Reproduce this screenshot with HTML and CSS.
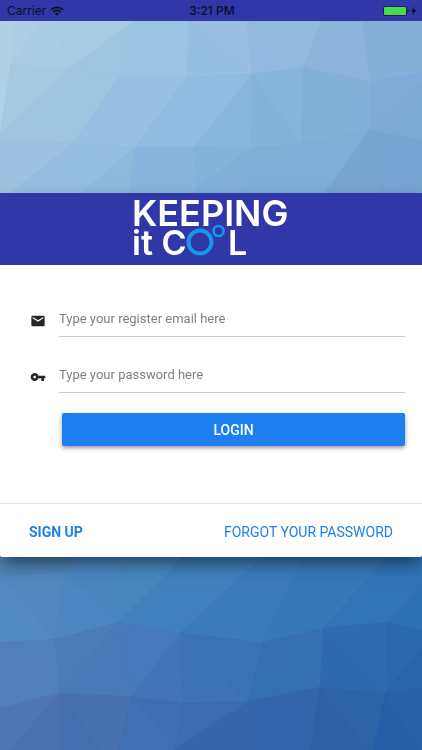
FILE: index.html
```html
<!DOCTYPE html>
<html lang="en">
<head>
    <meta charset="UTF-8">
    <meta name="viewport" content="width=device-width, initial-scale=1.0">
    <title>Keeping it Cool - Login</title>
    <link rel="stylesheet" href="styles.css">
</head>
<body>
    <svg class="background" viewBox="0 0 1266 2250" preserveAspectRatio="xMidYMid slice" aria-hidden="true">
        <defs>
            <linearGradient id="base" x1="0" y1="0" x2="0.3" y2="1">
                <stop offset="0" stop-color="#a5c9e1"/>
                <stop offset="1" stop-color="#3368ab"/>
            </linearGradient>
        </defs>
        <rect width="1266" height="2250" fill="url(#base)"/>

        <!-- top -->
        <polygon fill="#b0d0e6" points="0,0 48,0 45,60 32,192 0,405"/>
        <polygon fill="#adcee5" points="48,0 165,0 125,60 32,192 45,60"/>
        <polygon fill="#a9cbe4" points="165,0 150,0 170,60 207,207 32,192 125,60"/>
        <polygon fill="#a8cae3" points="155,0 490,0 405,60 207,207 170,60"/>
        <polygon fill="#a0c5e1" points="405,60 207,207 358,231 385,75"/>
        <polygon fill="#9dc4e2" points="405,0 565,0 565,231 358,231 385,75 405,60"/>
        <polygon fill="#97bfe1" points="565,60 755,222 560,231"/>
        <polygon fill="#9abfe2" points="565,60 740,60 755,222"/>
        <polygon fill="#93b9df" points="740,60 910,202 755,222"/>
        <polygon fill="#94bbdc" points="740,60 965,60 910,202"/>
        <polygon fill="#8eb4da" points="965,60 1087,60 1110,245 910,202"/>
        <polygon fill="#87b0d9" points="1087,60 1266,60 1266,218 1110,245"/>

        <polygon fill="#a5c9e1" points="32,192 207,207 0,405"/>
        <polygon fill="#9fc5e1" points="207,207 358,231 218,432 0,420 0,405"/>
        <polygon fill="#99c0e2" points="358,231 560,231 407,440 218,432"/>
        <polygon fill="#91bbdf" points="560,231 755,222 583,442 407,440"/>
        <polygon fill="#8bb6dc" points="755,222 755,444 583,442"/>
        <polygon fill="#86b2d9" points="755,222 903,432 755,444"/>
        <polygon fill="#8ab5da" points="755,222 910,202 903,432"/>
        <polygon fill="#83b0d9" points="910,202 1107,390 903,432"/>
        <polygon fill="#85b0d8" points="910,202 1110,245 1107,390"/>
        <polygon fill="#82aad9" points="1110,245 1266,218 1266,250 1107,390"/>
        <polygon fill="#7ea8d6" points="1266,250 1266,422 1107,390"/>

        <polygon fill="#9ec2df" points="0,420 218,432 30,580 0,600"/>
        <polygon fill="#95bde0" points="218,432 407,440 220,600 0,600 30,580"/>
        <polygon fill="#8dbadb" points="407,440 385,600 220,600"/>
        <polygon fill="#8ab4db" points="407,440 583,442 590,560 580,600 385,600"/>
        <polygon fill="#85b3da" points="583,442 755,444 590,560"/>
        <polygon fill="#80b0d9" points="755,444 720,600 580,600 590,560"/>
        <polygon fill="#7faed8" points="755,444 903,432 1107,390 960,600 720,600"/>
        <polygon fill="#78a6d3" points="1107,390 1147,600 960,600"/>
        <polygon fill="#77a4d2" points="1107,390 1266,422 1266,600 1147,600"/>

        <!-- bottom -->
        <polygon fill="#4c84b4" points="0,1640 250,1640 195,1718 0,1730"/>
        <polygon fill="#5288c0" points="0,1730 195,1718 165,1918"/>
        <polygon fill="#528ac4" points="0,1730 165,1918 0,1927"/>
        <polygon fill="#4d86c0" points="195,1718 352,1867 165,1918"/>
        <polygon fill="#4986bf" points="195,1718 250,1640 365,1640 352,1867"/>
        <polygon fill="#4687be" points="365,1640 570,1640 500,1725 352,1867"/>
        <polygon fill="#4080bd" points="570,1640 820,1640 540,1898 352,1867 500,1725"/>
        <polygon fill="#3b7bb9" points="820,1640 925,1640 788,1928 540,1898"/>
        <polygon fill="#3679b6" points="925,1640 1190,1640 970,1883 788,1928"/>
        <polygon fill="#3074b5" points="1190,1640 1266,1640 1266,1750 1162,1867 970,1883"/>
        <polygon fill="#2e71b2" points="1266,1750 1266,1890 1162,1867"/>

        <polygon fill="#5080bb" points="0,1927 165,1918 180,2078"/>
        <polygon fill="#507fba" points="0,1927 180,2078 20,2120 0,2120"/>
        <polygon fill="#4a7db8" points="165,1918 352,1867 180,2078"/>
        <polygon fill="#487ab7" points="352,1867 395,2090 180,2078"/>
        <polygon fill="#467abb" points="352,1867 540,1898 395,2090"/>
        <polygon fill="#4275b6" points="540,1898 550,2110 395,2090"/>
        <polygon fill="#3c74b5" points="540,1898 745,2105 550,2110"/>
        <polygon fill="#3973b2" points="540,1898 788,1928 745,2105"/>
        <polygon fill="#346fae" points="788,1928 960,2062 745,2105"/>
        <polygon fill="#3570b0" points="788,1928 970,1883 960,2062"/>
        <polygon fill="#2e69ad" points="970,1883 1155,2080 960,2062"/>
        <polygon fill="#2f6cae" points="970,1883 1162,1867 1155,2080"/>
        <polygon fill="#2a69ae" points="1162,1867 1266,1890 1266,1940 1155,2080"/>
        <polygon fill="#2964a9" points="1266,1940 1266,2062 1155,2080"/>

        <polygon fill="#4f76b2" points="0,2120 20,2120 180,2078 30,2250 0,2250"/>
        <polygon fill="#4b72ae" points="180,2078 180,2250 30,2250"/>
        <polygon fill="#466eae" points="180,2078 300,2250 180,2250"/>
        <polygon fill="#4673b0" points="180,2078 395,2090 355,2250 300,2250"/>
        <polygon fill="#3f70b2" points="395,2090 530,2240 525,2250 355,2250"/>
        <polygon fill="#3e6eb2" points="395,2090 550,2110 530,2240"/>
        <polygon fill="#3a6cae" points="550,2110 745,2105 530,2245"/>
        <polygon fill="#3566aa" points="745,2105 750,2250 525,2250"/>
        <polygon fill="#3265a9" points="745,2105 960,2062 930,2250 750,2250"/>
        <polygon fill="#2d61a4" points="960,2062 1110,2250 930,2250"/>
        <polygon fill="#2d64a6" points="960,2062 1155,2080 1120,2250 1110,2250"/>
        <polygon fill="#265ea6" points="1155,2080 1266,2250 1120,2250"/>
        <polygon fill="#2760a6" points="1155,2080 1266,2062 1266,2250"/>
    </svg>

    <header class="status-bar">
        <span class="carrier">
            Carrier
            <svg width="14" height="10" viewBox="0 0 14 10" aria-hidden="true">
                <g fill="none" stroke="#0b0e2c" stroke-width="1.6">
                    <path d="M1 3.8a8.6 8.6 0 0 1 12 0"/>
                    <path d="M3.1 6a5.6 5.6 0 0 1 7.8 0"/>
                </g>
                <path fill="#0b0e2c" d="M7 9.8 4.9 7.7a3 3 0 0 1 4.2 0z"/>
            </svg>
        </span>
        <span class="time">3:21 PM</span>
        <span class="battery">
            <svg width="34" height="12" viewBox="0 0 34 12" aria-hidden="true">
                <rect x="0.5" y="1.5" width="23" height="9" rx="1.5" fill="#4cd950" stroke="#14205a"/>
                <path fill="#0b0e2c" d="M24.5 4.2c1.6.5 1.6 3.1 0 3.6z"/>
                <path fill="#0b0e2c" d="M31.8 1.5 28 6.5h2.2l-1 4 4.2-5.5h-2.4z"/>
            </svg>
        </span>
    </header>

    <main>
        <form class="card">
            <div class="card-header">
                <svg class="logo" width="158" height="72" viewBox="0 0 158 72" role="img" aria-label="Keeping it Cool">
                    <text class="logo-top" x="0" y="33">KEEPING</text>
                    <text x="0" y="62">it C</text>
                    <text x="96" y="62">L</text>
                    <circle cx="68" cy="49" r="11.5" stroke-width="4"/>
                    <circle cx="86.5" cy="38" r="5" stroke-width="2.6"/>
                </svg>
            </div>

            <div class="card-body">
                <div class="field">
                    <label for="email" aria-label="Email">
                        <svg width="16" height="16" viewBox="0 0 24 24" aria-hidden="true">
                            <path fill="#262626" d="M20 4H4c-1.1 0-1.99.9-1.99 2L2 18c0 1.1.9 2 2 2h16c1.1 0 2-.9 2-2V6c0-1.1-.9-2-2-2zm0 4l-8 5-8-5V6l8 5 8-5v2z"/>
                        </svg>
                    </label>
                    <input type="email" id="email" placeholder="Type your register email here">
                </div>
                <div class="field">
                    <label for="password" aria-label="Password">
                        <svg width="16" height="16" viewBox="0 0 24 24" aria-hidden="true">
                            <path fill="#262626" d="M12.65 10C11.83 7.67 9.61 6 7 6c-3.31 0-6 2.69-6 6s2.69 6 6 6c2.61 0 4.83-1.67 5.65-4H17v4h4v-4h2v-4H12.65zM7 14c-1.1 0-2-.9-2-2s.9-2 2-2 2 .9 2 2-.9 2-2 2z"/>
                        </svg>
                    </label>
                    <input type="password" id="password" placeholder="Type your password here">
                </div>
                <button type="submit">LOGIN</button>
            </div>

            <div class="card-footer">
                <a class="signup" href="#signup">SIGN UP</a>
                <a href="#forgot">FORGOT YOUR PASSWORD</a>
            </div>
        </form>
    </main>
</body>
</html>
```
FILE: styles.css
```css
* {
    box-sizing: border-box;
}

body {
    display: flex;
    flex-direction: column;
    min-height: 100vh;
    margin: 0;
    font-family: Roboto, sans-serif;
    font-size: 14px;
    background-color: #5b92c8;
}

.background {
    position: fixed;
    top: 0;
    left: 0;
    width: 100%;
    height: 100%;
    z-index: -1;
}

.status-bar {
    display: grid;
    grid-template-columns: 1fr auto 1fr;
    align-items: center;
    height: 21px;
    padding: 0 5px 0 7px;
    background-color: #2f38a6;
    color: #0b0e2c;
    font-family: Inter, sans-serif;
    font-size: 12px;
}

.carrier {
    display: flex;
    align-items: center;
    gap: 4px;
}

.time {
    font-weight: 500;
}

.battery {
    display: flex;
    justify-content: flex-end;
}

main {
    flex: 1;
    display: flex;
    flex-direction: column;
    justify-content: center;
    padding-bottom: 21px;
}

.card {
    border-radius: 2px;
    background-color: #ffffff;
    box-shadow: 0 8px 16px -2px rgba(0, 0, 0, 0.5);
}

.card-header {
    display: flex;
    justify-content: center;
    height: 72px;
    background-color: #2f38a6;
}

.logo {
    overflow: visible;
}

.logo text {
    font-family: Inter, sans-serif;
    font-size: 34px;
    font-weight: 600;
    fill: #ffffff;
}

.logo .logo-top {
    font-size: 36px;
}

.logo circle {
    fill: none;
    stroke: #1896ea;
}

.card-body {
    padding: 36px 17px 57px 30px;
}

.field {
    display: flex;
    align-items: center;
    margin-bottom: 20px;
}

.field label {
    width: 29px;
    height: 16px;
    padding-top: 2px;
}

.field svg {
    display: block;
}

.field input {
    flex: 1;
    min-width: 0;
    height: 36px;
    padding: 0;
    border: none;
    border-bottom: 1px solid #cccccc;
    background: none;
    font-family: inherit;
    font-size: 13px;
    color: #262626;
    outline: none;
}

.field input::placeholder {
    color: #808080;
}

button {
    display: block;
    width: calc(100% - 32px);
    height: 33px;
    margin-left: 32px;
    border: none;
    border-radius: 2px;
    background-color: #1e80f0;
    color: #ffffff;
    font-family: inherit;
    font-size: 14px;
    font-weight: 500;
    box-shadow: 0 2px 4px rgba(0, 0, 0, 0.4);
    cursor: pointer;
}

.card-footer {
    display: flex;
    justify-content: space-between;
    align-items: center;
    height: 54px;
    padding: 2px 29px 0;
    border-top: 1px solid #e0e0e0;
}

.card-footer a {
    color: #1e80e8;
    text-decoration: none;
}

.card-footer .signup {
    font-weight: 700;
}
```
